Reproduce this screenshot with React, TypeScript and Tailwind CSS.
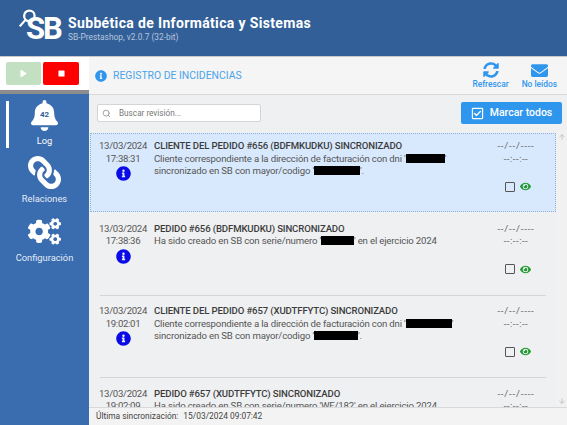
import { FaBell, FaLink, FaCogs, FaSyncAlt, FaEnvelope, FaRegCheckSquare, FaEye, FaInfoCircle, FaPlay, FaStop } from "react-icons/fa";
import { Search, ArrowUp, ArrowDown } from "lucide-react";

interface Incident {
  date: string;
  time: string;
  title: string;
  line1: string;
  redact1: number;
  tail1?: string;
  line2?: string;
  redact2?: number;
  selected?: boolean;
}

const incidents: Incident[] = [
  {
    date: "13/03/2024",
    time: "17:38:31",
    title: "CLIENTE DEL PEDIDO #656 (BDFMKUDKU) SINCRONIZADO",
    line1: "Cliente correspondiente a la dirección de facturación con dni '",
    redact1: 39,
    tail1: "'",
    line2: "sincronizado en SB con mayor/codigo '",
    redact2: 46,
    selected: true,
  },
  {
    date: "13/03/2024",
    time: "17:38:36",
    title: "PEDIDO #656 (BDFMKUDKU) SINCRONIZADO",
    line1: "Ha sido creado en SB con serie/numero '",
    redact1: 33,
    tail1: "' en el ejercicio 2024",
  },
  {
    date: "13/03/2024",
    time: "19:02:01",
    title: "CLIENTE DEL PEDIDO #657 (XUDTFFYTC) SINCRONIZADO",
    line1: "Cliente correspondiente a la dirección de facturación con dni '",
    redact1: 46,
    tail1: "'",
    line2: "sincronizado en SB con mayor/codigo '",
    redact2: 44,
  },
  {
    date: "13/03/2024",
    time: "19:02:09",
    title: "PEDIDO #657 (XUDTFFYTC) SINCRONIZADO",
    line1: "Ha sido creado en SB con serie/numero 'WE/182' en el ejercicio 2024",
    redact1: 0,
  },
];

function Redacted({ width }: { width: number }) {
  return <span className="inline-block h-[9px] bg-black align-[-1px]" style={{ width }} />;
}

function IncidentRow({ item }: { item: Incident }) {
  return (
    <div
      className={`flex h-[79px] shrink-0 pt-[6px] text-[9.6px] leading-[12.5px] ${
        item.selected ? "border border-dotted border-[#8fb0d8] bg-[#d9e9fd]" : "border border-transparent"
      }`}
    >
      <div className="flex w-[63px] shrink-0 flex-col items-center pl-[1px] tracking-[-0.3px] text-[#555]">
        <span>{item.date}</span>
        <span>{item.time}</span>
        <FaInfoCircle className="mt-[1px] text-[15px] text-[#0a0ae6]" />
      </div>
      <div className="min-w-0 flex-1 text-[#555]">
        <div className="tracking-[-0.13px] font-medium text-[#3c3c3c]">{item.title}</div>
        <div className="whitespace-nowrap tracking-[-0.16px]">
          {item.line1}
          {item.redact1 > 0 && <Redacted width={item.redact1} />}
          {item.tail1}
        </div>
        {item.line2 && (
          <div className="whitespace-nowrap tracking-[-0.16px]">
            {item.line2}
            <Redacted width={item.redact2 ?? 0} />
            &apos;.
          </div>
        )}
      </div>
      <div className="flex w-[78px] shrink-0 flex-col items-center text-[#666]">
        <span className="tracking-[0.8px]">--/--/----</span>
        <span className="tracking-[0.5px]">--:--:--</span>
        <div className="mt-[16px] flex items-center gap-[5px] pl-[3px]">
          <span className="h-[10px] w-[10px] rounded-[1px] border border-[#555]" />
          <FaEye className="text-[11px] text-[#1f9a2e]" />
        </div>
      </div>
    </div>
  );
}

function NavItem({ icon, label, active }: { icon: React.ReactNode; label: string; active?: boolean }) {
  return (
    <div className="relative flex flex-col items-center">
      {active && <span className="absolute left-[6px] top-[1px] h-[47px] w-[3px] bg-white" />}
      {icon}
      <span className={`mt-[4px] text-[9.3px] leading-[12px] ${active ? "text-white" : "text-[#e4ecf7]"}`}>{label}</span>
    </div>
  );
}

export default function App() {
  return (
    <div className="flex h-[425px] w-[567px] flex-col overflow-hidden bg-[#eff0f2] font-['Roboto','Noto_Sans',sans-serif]">
      <header className="flex h-[56px] shrink-0 items-center bg-[#335f98] pl-[18px]">
        <div className="relative mr-[5px] flex h-[32px] w-[45px] items-end">
          <svg viewBox="0 0 24 24" className="absolute left-0 top-[-4px] h-[21px] w-[21px]" fill="none" stroke="white" strokeWidth="2.6">
            <circle cx="13" cy="9" r="6" />
            <path d="M9 13 L2 21" />
          </svg>
          <span className="ml-[8px] text-[31px] font-bold leading-[30px] tracking-[-2px] text-white">SB</span>
        </div>
        <div className="flex flex-col">
          <span className="text-[14px] font-bold leading-[18px] tracking-[0.35px] text-white">Subbética de Informática y Sistemas</span>
          <span className="text-[8.4px] leading-[11px] text-[#b4c6de]">SB-Prestashop, v2.0.7 (32-bit)</span>
        </div>
      </header>

      <div className="flex min-h-0 flex-1 border-t border-[#c9c9c9]">
        <aside className="flex w-[89px] shrink-0 flex-col">
          <div className="flex h-[33px] shrink-0 items-center gap-[2px] bg-white pl-[6px]">
            <span className="flex h-[23px] w-[35px] items-center justify-center rounded-[2px] bg-[#c3e0c3]">
              <FaPlay className="text-[7px] text-white" />
            </span>
            <span className="flex h-[23px] w-[36px] items-center justify-center rounded-[2px] bg-[#fe0000]">
              <FaStop className="text-[7px] text-white" />
            </span>
          </div>
          <div className="h-[4px] shrink-0 bg-[#8d8d8d]" />
          <nav className="flex flex-1 flex-col gap-[9px] bg-[#3a6cb0] pt-[6px]">
            <NavItem
              active
              label="Log"
              icon={
                <div className="relative">
                  <FaBell className="text-[31px] text-white" />
                  <span className="absolute inset-x-0 top-[10px] text-center text-[8px] font-bold leading-[10px] text-[#335f98]">42</span>
                </div>
              }
            />
            <NavItem label="Relaciones" icon={<FaLink className="-scale-x-100 text-[33px] text-white" />} />
            <NavItem label="Configuración" icon={<FaCogs className="mt-[1px] text-[33px] text-white" />} />
          </nav>
        </aside>

        <main className="flex min-w-0 flex-1 flex-col">
          <div className="flex h-[38px] shrink-0 items-center border-b border-[#d9d9d9] bg-[#f5f5f5] pl-[6px] pr-[10px]">
            <FaInfoCircle className="text-[12px] text-[#2f96ee]" />
            <span className="ml-[6px] flex-1 text-[10.4px] text-[#4ba3ea]">REGISTRO DE INCIDENCIAS</span>
            <div className="flex flex-col items-center text-[#2f96ee]">
              <FaSyncAlt className="text-[16px]" />
              <span className="mt-[1px] text-[8.4px] font-medium leading-[11px]">Refrescar</span>
            </div>
            <div className="ml-[13px] flex flex-col items-center text-[#2f96ee]">
              <FaEnvelope className="text-[17px]" />
              <span className="text-[8.4px] font-medium leading-[11px]">No leídos</span>
            </div>
          </div>

          <div className="flex h-[36px] shrink-0 items-center justify-between pl-[8px] pr-[5px]">
            <div className="flex h-[18px] w-[164px] items-center rounded-[2px] border border-[#d4d4d4] bg-white pl-[4px]">
              <Search size={9} className="text-[#888]" strokeWidth={2} />
              <span className="ml-[8px] text-[8.2px] text-[#777]">Buscar revisión...</span>
            </div>
            <div className="flex h-[22px] w-[101px] items-center justify-center gap-[6px] rounded-[2px] bg-[#2f96ee] text-white">
              <FaRegCheckSquare className="text-[13px]" />
              <span className="text-[10.5px] font-medium">Marcar todos</span>
            </div>
          </div>

          <div className="flex min-h-0 flex-1">
            <div className="min-w-0 flex-1 overflow-hidden pl-[1px] pt-[2px]">
              <div className="flex flex-col">
                {incidents.map((item, i) => (
                  <div key={item.time} className="flex h-[82.6px] shrink-0 flex-col">
                    <IncidentRow item={item} />
                    {i > 0 && i < 3 && <div className="ml-[10px] mr-[10px] h-px bg-[#d5d5d5]" />}
                  </div>
                ))}
              </div>
            </div>
            <div className="flex w-[11px] shrink-0 flex-col justify-between bg-[#f1f1f1] text-[#b5b5b5]">
              <ArrowUp size={8} className="mx-auto mt-[2px]" />
              <ArrowDown size={8} className="mx-auto mb-[2px]" />
            </div>
          </div>

          <footer className="flex h-[18px] shrink-0 items-center gap-[5px] border-t border-[#d9d9d9] bg-[#f3f3f3] pl-[7px] text-[8.4px] text-[#444]">
            <span>Última sincronización:</span>
            <span>15/03/2024 09:07:42</span>
          </footer>
        </main>
      </div>
    </div>
  );
}
